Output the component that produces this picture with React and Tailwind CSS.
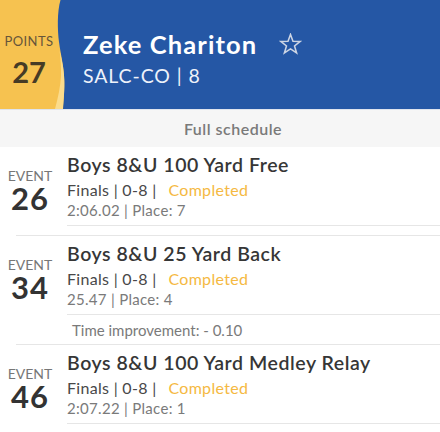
import React from "react";

const events = [
  { num: "26", title: "Boys 8&U 100 Yard Free", time: "2:06.02 | Place: 7" },
  { num: "34", title: "Boys 8&U 25 Yard Back", time: "25.47 | Place: 4", improvement: "Time improvement: - 0.10" },
  { num: "46", title: "Boys 8&U 100 Yard Medley Relay", time: "2:07.22 | Place: 1" },
];

function Star() {
  return (
    <svg width="23" height="22" viewBox="0 0 24 23" fill="none">
      <polygon
        points="12,1.5 14.6,8.6 22.2,8.8 16.2,13.5 18.4,20.9 12,16.6 5.6,20.9 7.8,13.5 1.8,8.8 9.4,8.6"
        stroke="#cdd5e4"
        strokeWidth="1.6"
        strokeLinejoin="miter"
      />
    </svg>
  );
}

function Wave() {
  return (
    <svg className="absolute inset-0" width="66" height="109" viewBox="0 0 66 109" preserveAspectRatio="none">
      <path d="M0 0 H60.5 C57 12, 57.5 30, 59 42 C60.5 54, 64 66, 64.3 80 C64.5 92, 63.5 100, 63 109 H0 Z" fill="#f6c250" />
      <path d="M59.5 50 C62.5 62, 64.3 72, 64.3 82 C64.5 93, 63.5 101, 63 109 L55 109 C58 98, 60.5 86, 61 76 C61.3 66, 60.5 58, 59.5 50 Z" fill="#fbdc8c" />
    </svg>
  );
}

export default function App() {
  return (
    <div className="w-[440px] h-[432px] overflow-hidden bg-white" style={{ fontFamily: "Lato, 'Noto Sans', sans-serif" }}>
      {/* Header */}
      <div className="flex h-[109px] bg-[#2557a5]">
        <div className="relative w-[66px] shrink-0">
          <Wave />
          <div className="relative w-[58px] flex flex-col items-center pt-[33px]">
            <div className="text-[13px] leading-[16px] text-[#66553a] tracking-[0.4px]">POINTS</div>
            <div className="mt-[9px] text-[29px] leading-[28px] font-bold text-[#463b25]">27</div>
          </div>
        </div>
        <div className="flex flex-col pl-[17px] pt-[29px]">
          <div className="flex items-center">
            <span className="text-[25.5px] leading-[30px] font-bold text-white tracking-[1.1px]">Zeke Chariton</span>
            <span className="ml-[22px]"><Star /></span>
          </div>
          <div className="mt-[5px] text-[19.5px] leading-[24px] text-[#eef2fa] tracking-[0.9px]">SALC-CO | 8</div>
        </div>
      </div>
      {/* Full schedule strip */}
      <div className="h-[38px] bg-[#f6f6f6] border-t border-[#dfe4ee] flex items-center justify-center pl-[26px]">
        <span className="text-[16px] font-semibold text-[#7a7a7a] tracking-[0.5px]">Full schedule</span>
      </div>
      {/* Events */}
      {events.map((e) => (
        <div key={e.num}>
          <div className="flex">
            <div className="w-[60px] shrink-0 flex flex-col items-center pt-[20px]">
              <div className="text-[14px] leading-[17px] text-[#777]">EVENT</div>
              <div className="text-[31px] leading-[28px] font-bold text-[#333] tracking-[1px]">{e.num}</div>
            </div>
            <div className="flex-1 ml-[7px]">
              <div className="pt-[6px] pb-[5px] border-b border-[#e6e6e6]">
                <div className="text-[19.5px] leading-[24px] font-semibold text-[#363636] whitespace-nowrap tracking-[0.55px]">{e.title}</div>
                <div className="mt-[3px] text-[16px] leading-[20px] text-[#484848] whitespace-nowrap tracking-[0.3px]">
                  Finals | 0-8 |<span className="ml-[12px] text-[#f5b942]">Completed</span>
                </div>
                <div className="text-[15px] leading-[20px] text-[#7a7a7a] whitespace-nowrap tracking-[0.3px]">{e.time}</div>
              </div>
              {e.improvement ? (
                <div className="pt-[5px] pb-[4px] pl-[5px] text-[15px] leading-[20px] text-[#7a7a7a]">{e.improvement}</div>
              ) : (
                <div className="h-[9px]" />
              )}
            </div>
          </div>
          <div className="ml-[16px] h-px bg-[#e6e6e6]" />
        </div>
      ))}
    </div>
  );
}
